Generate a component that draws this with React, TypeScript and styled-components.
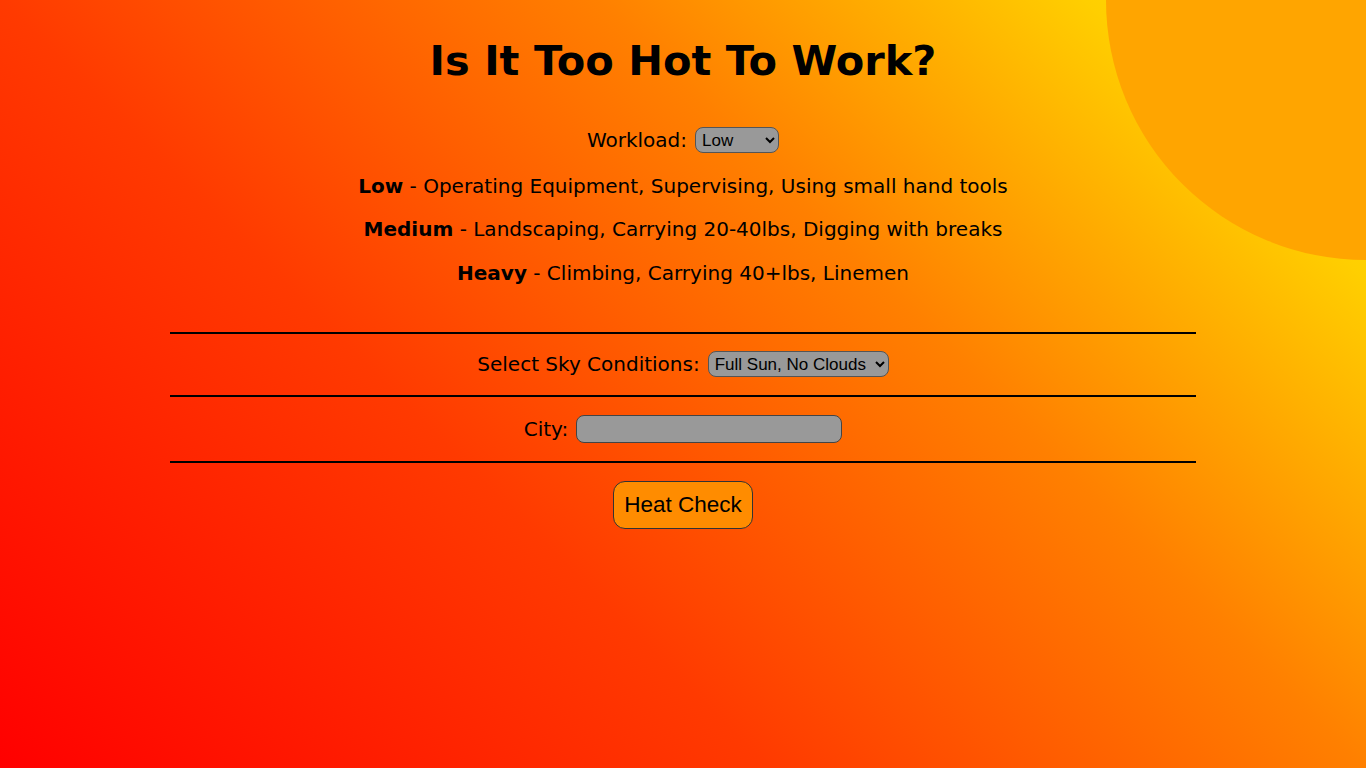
import React from "react";
import styled, { createGlobalStyle } from "styled-components";

const Global = createGlobalStyle`
  html, body { margin: 0; padding: 0; }
  body {
    min-height: 768px;
    font-family: "DejaVu Sans", Verdana, sans-serif;
    background: linear-gradient(
      45deg,
      #ff0000 0%,
      #ff3a00 36%,
      #ff8000 64%,
      #ffcf00 87%,
      #ffe600 100%
    );
    background-attachment: fixed;
    overflow: hidden;
  }
`;

const Page = styled.div`
  position: relative;
  width: 1366px;
  height: 768px;
  overflow: hidden;
  display: flex;
  flex-direction: column;
  align-items: center;
  color: #000;
`;

const Sun = styled.div`
  position: absolute;
  width: 520px;
  height: 520px;
  border-radius: 50%;
  background: #ffa500;
  top: -260px;
  right: -260px;
`;

const Title = styled.h1`
  position: relative;
  margin: 38px 0 0;
  font-size: 41.5px;
  font-weight: bold;
  line-height: 46px;
`;

const Row = styled.div<{ $mt?: number }>`
  position: relative;
  display: flex;
  align-items: center;
  justify-content: center;
  gap: 8px;
  font-size: 20px;
  margin-top: ${(p) => p.$mt ?? 0}px;
`;

const Desc = styled.p<{ $mt: number }>`
  position: relative;
  margin: ${(p) => p.$mt}px 0 0;
  font-size: 20px;
  line-height: 24px;
  text-align: center;
`;

const Rule = styled.hr<{ $mt: number }>`
  position: relative;
  width: 1026px;
  height: 2px;
  border: none;
  background: #000;
  margin: ${(p) => p.$mt}px 0 0;
`;

const Select = styled.select<{ $w: number }>`
  font-family: "Liberation Sans", Arial, sans-serif;
  font-size: 17px;
  width: ${(p) => p.$w}px;
  height: 26px;
  background: #999;
  border: 1px solid #555;
  border-radius: 8px;
  color: #000;
  padding: 0 2px;
`;

const Input = styled.input`
  width: 266px;
  height: 28px;
  box-sizing: border-box;
  background: #999;
  border: 1px solid #444;
  border-radius: 8px;
  font-size: 17px;
`;

const Button = styled.button`
  position: relative;
  margin-top: 18px;
  width: 140px;
  height: 48px;
  background: #ff8c00;
  border: 1px solid #333;
  border-radius: 12px;
  font-family: "Liberation Sans", Arial, sans-serif;
  font-size: 22.5px;
  color: #000;
`;

export default function App() {
  return (
    <>
      <Global />
      <Page>
        <Sun />
        <Title>Is It Too Hot To Work?</Title>
        <Row $mt={43}>
          <span>Workload:</span>
          <Select $w={84} defaultValue="low">
            <option value="low">Low</option>
            <option value="medium">Medium</option>
            <option value="heavy">Heavy</option>
          </Select>
        </Row>
        <Desc $mt={21}>
          <b>Low</b> - Operating Equipment, Supervising, Using small hand tools
        </Desc>
        <Desc $mt={19}>
          <b>Medium</b> - Landscaping, Carrying 20-40lbs, Digging with breaks
        </Desc>
        <Desc $mt={20}>
          <b>Heavy</b> - Climbing, Carrying 40+lbs, Linemen
        </Desc>
        <Rule $mt={47} />
        <Row $mt={17}>
          <span>Select Sky Conditions:</span>
          <Select $w={181} defaultValue="full">
            <option value="full">Full Sun, No Clouds</option>
            <option value="partly">Partly Cloudy</option>
            <option value="overcast">Overcast</option>
          </Select>
        </Row>
        <Rule $mt={18} />
        <Row $mt={18}>
          <span>City:</span>
          <Input type="text" />
        </Row>
        <Rule $mt={18} />
        <Button>Heat Check</Button>
      </Page>
    </>
  );
}
